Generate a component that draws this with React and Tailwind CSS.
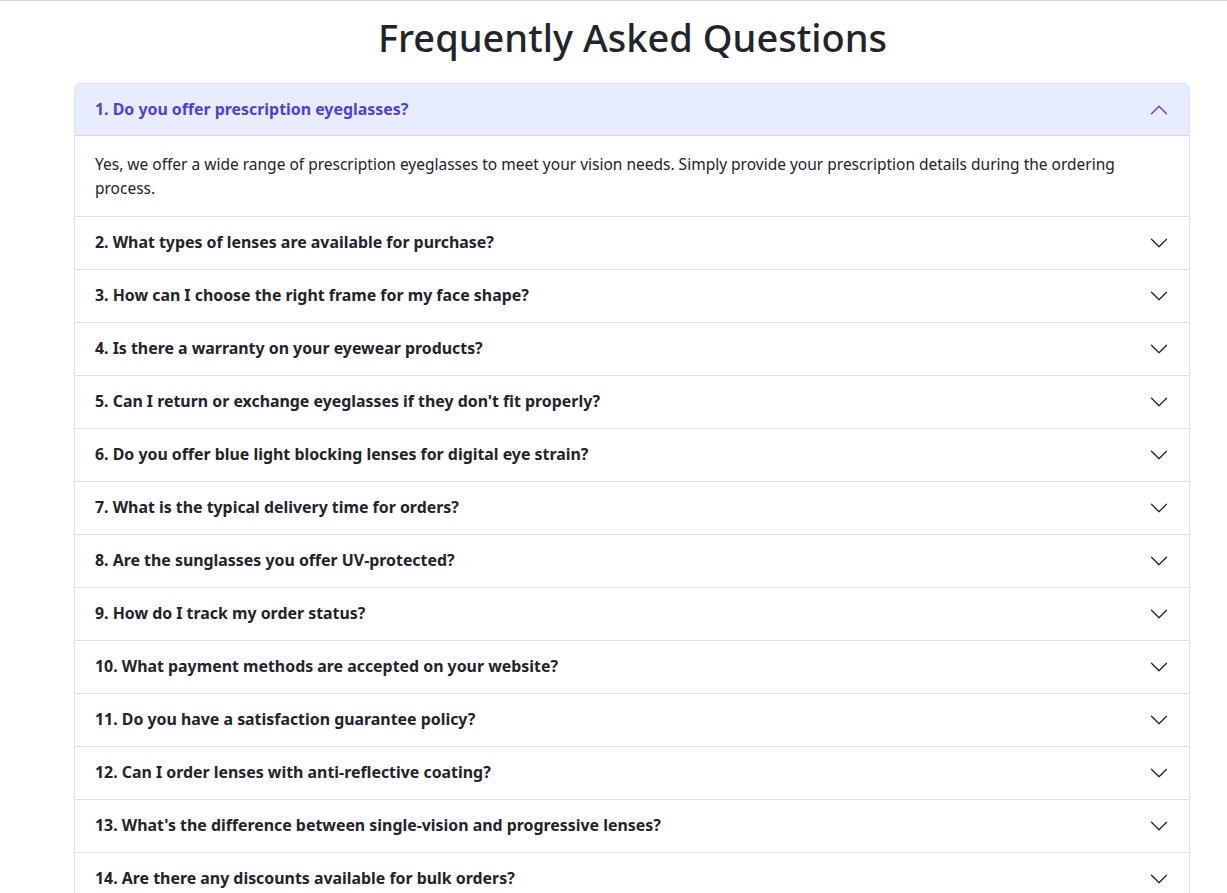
import React, { useState } from "react";

const faqs = [
  "1. Do you offer prescription eyeglasses?",
  "2. What types of lenses are available for purchase?",
  "3. How can I choose the right frame for my face shape?",
  "4. Is there a warranty on your eyewear products?",
  "5. Can I return or exchange eyeglasses if they don't fit properly?",
  "6. Do you offer blue light blocking lenses for digital eye strain?",
  "7. What is the typical delivery time for orders?",
  "8. Are the sunglasses you offer UV-protected?",
  "9. How do I track my order status?",
  "10. What payment methods are accepted on your website?",
  "11. Do you have a satisfaction guarantee policy?",
  "12. Can I order lenses with anti-reflective coating?",
  "13. What's the difference between single-vision and progressive lenses?",
  "14. Are there any discounts available for bulk orders?",
];

function Chevron({ up }) {
  return (
    <svg
      width="20"
      height="20"
      viewBox="0 0 16 16"
      className={up ? "rotate-180 text-[#4b3fe0]" : "text-[#212529]"}
      fill="none"
      stroke="currentColor"
      strokeWidth="1"
      strokeLinecap="round"
      strokeLinejoin="round"
    >
      <path d="M2 5L8 11L14 5" />
    </svg>
  );
}

export default function App() {
  const [open, setOpen] = useState(0);
  return (
    <div
      className="min-h-screen bg-white border-t border-[#d4d4d4] text-[#212529]"
      style={{ fontFamily: '"Noto Sans", "Open Sans", sans-serif' }}
    >
      <h1 className="pt-[12px] mb-[22px] text-center text-[38px] leading-[48px] font-medium pl-[38px]">
        Frequently Asked Questions
      </h1>
      <div className="ml-[74px] w-[1116px] border border-[#dee2e6] rounded-[6px] overflow-hidden">
        {faqs.map((q, i) => {
          const isOpen = open === i;
          return (
            <div key={i} className={i > 0 ? "border-t border-[#dee2e6]" : ""}>
              <button
                onClick={() => setOpen(isOpen ? -1 : i)}
                className={
                  "w-full h-[52px] flex items-center justify-between pl-[20px] pr-[20px] text-left text-[15.9px] font-bold " +
                  (isOpen
                    ? "bg-[#e8edfe] text-[#4b3fe0] border-b border-[#d3d8e6]"
                    : "bg-white text-[#212529]")
                }
              >
                <span>{q}</span>
                <Chevron up={isOpen} />
              </button>
              {isOpen && (
                <div className="pl-[20px] py-[16px] text-[15.5px] leading-[24px] pr-[40px]">
                  Yes, we offer a wide range of prescription eyeglasses to meet your vision needs. Simply provide your prescription details during the ordering process.
                </div>
              )}
            </div>
          );
        })}
      </div>
    </div>
  );
}
